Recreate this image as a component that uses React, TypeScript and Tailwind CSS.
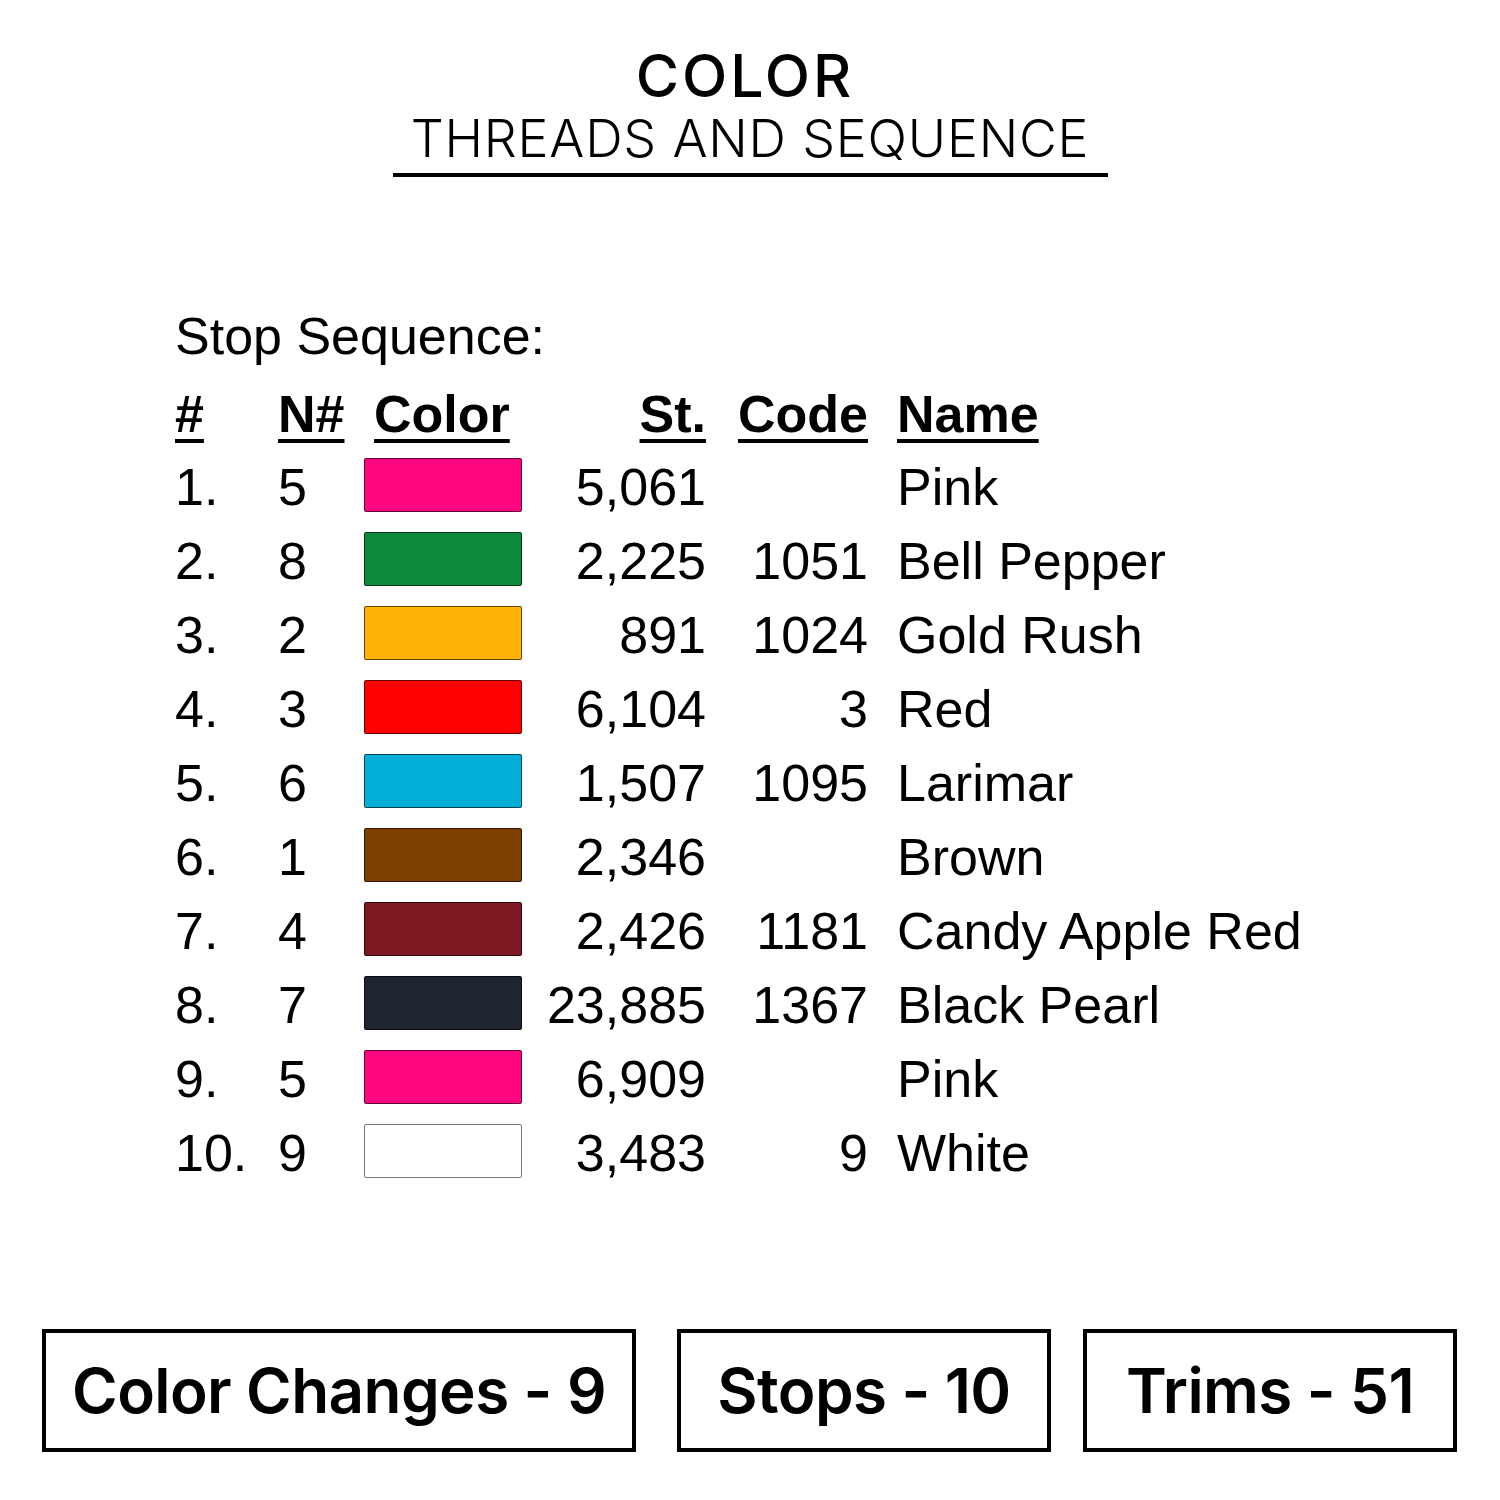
const rows = [
  { n: "1.", needle: "5", color: "bg-[#fe0680]", st: "5,061", code: "", name: "Pink" },
  { n: "2.", needle: "8", color: "bg-[#0b8a3b]", st: "2,225", code: "1051", name: "Bell Pepper" },
  { n: "3.", needle: "2", color: "bg-[#ffb208]", st: "891", code: "1024", name: "Gold Rush" },
  { n: "4.", needle: "3", color: "bg-[#ff0000]", st: "6,104", code: "3", name: "Red" },
  { n: "5.", needle: "6", color: "bg-[#02afd6]", st: "1,507", code: "1095", name: "Larimar" },
  { n: "6.", needle: "1", color: "bg-[#7c3f00]", st: "2,346", code: "", name: "Brown" },
  { n: "7.", needle: "4", color: "bg-[#7d1820]", st: "2,426", code: "1181", name: "Candy Apple Red" },
  { n: "8.", needle: "7", color: "bg-[#1e2530]", st: "23,885", code: "1367", name: "Black Pearl" },
  { n: "9.", needle: "5", color: "bg-[#fe0680]", st: "6,909", code: "", name: "Pink" },
  { n: "10.", needle: "9", color: "bg-white", st: "3,483", code: "9", name: "White" },
];

export default function App() {
  return (
    <div className="w-[1500px] h-[1500px] bg-white text-black overflow-hidden">
      {/* TITLE */}
      <div className="flex flex-col items-center pt-[44px] font-['Inter',sans-serif]">
        <div className="text-[59px] leading-[64px] font-medium tracking-[3px] pr-[10px]">
          COLOR
        </div>
        <div className="mt-[1px] text-[52px] leading-[60px] font-light tracking-[0.8px]">
          THREADS AND SEQUENCE
        </div>
        <div className="mt-[4px] w-[715px] h-[4px] bg-black" />
      </div>

      {/* TABLE */}
      <div className="mt-[122px] pl-[175px] font-['Liberation_Sans',Arial,sans-serif] text-[52px] leading-[74px]">
        <div className="h-[74px]">Stop Sequence:</div>

        <div className="mt-[4px] h-[73px] flex font-bold underline decoration-[4px] underline-offset-[7px]">
          <div className="w-[103px]">#</div>
          <div className="w-[86px]">N#</div>
          <div className="w-[158px] pl-[10px]">Color</div>
          <div className="w-[184px] text-right">St.</div>
          <div className="w-[162px] text-right">Code</div>
          <div className="pl-[29px]">Name</div>
        </div>

        {rows.map((r, i) => (
          <div key={i} className="h-[74px] flex items-stretch">
            <div className="w-[103px]">{r.n}</div>
            <div className="w-[86px]">{r.needle}</div>
            <div className="w-[158px] flex items-center">
              <div
                className={`w-[160px] h-[54px] mt-[-4px] border-[1.5px] rounded-[2px] ${
                  r.color === "bg-white"
                    ? "border-[#777]"
                    : "border-black/60"
                } ${r.color}`}
              />
            </div>
            <div className="w-[184px] text-right">{r.st}</div>
            <div className="w-[162px] text-right">{r.code}</div>
            <div className="pl-[29px] whitespace-nowrap">{r.name}</div>
          </div>
        ))}
      </div>

      {/* COUNTS */}
      <div className="mt-[139px] flex font-['Inter',sans-serif] font-semibold text-[62px] tracking-[-0.6px]">
        <div className="ml-[42px] w-[594px] h-[123px] border-4 border-black flex items-center justify-center">
          Color Changes - 9
        </div>
        <div className="ml-[41px] w-[374px] h-[123px] border-4 border-black flex items-center justify-center">
          Stops - 10
        </div>
        <div className="ml-[32px] w-[374px] h-[123px] border-4 border-black flex items-center justify-center">
          Trims - 51
        </div>
      </div>
    </div>
  );
}
